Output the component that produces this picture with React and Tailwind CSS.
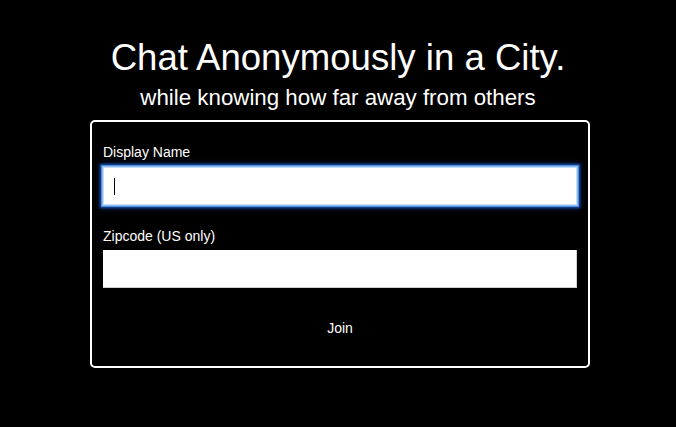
import { useState } from "react";

function App() {
  const [name, setName] = useState("");
  const [zip, setZip] = useState("");

  return (
    <div className="min-h-screen w-full bg-black text-white font-['Liberation_Sans',Arial,sans-serif] pt-[37px]">
      <div className="text-center">
        <h1 className="text-[36.6px] leading-[41px]">Chat Anonymously in a City.</h1>
        <div className="text-[22.3px] leading-[25px] mt-[7px]">while knowing how far away from others</div>
      </div>

      <div className="flex justify-center pl-[4px] mt-[10px]">
        <div className="w-[500px] border-2 border-white rounded-[5px] px-[11px] pt-[22px] pb-[30px]">
          <label className="block text-[14px] leading-[16px] mb-[7px]">Display Name</label>
          <div className="relative">
            <input
              value={name}
              onChange={(e) => setName(e.target.value)}
              className="block w-full h-[38px] bg-white text-black px-[10px] outline-none caret-transparent shadow-[inset_0_0_0_1px_#c5dcf8,0_0_0_1px_#8fbcf2,0_0_0_2px_#4a8de0,0_0_2px_3px_rgba(30,90,190,0.85),0_0_5px_4px_rgba(20,60,140,0.5)]"
            />
            <span className="absolute left-[11px] top-[11px] w-px h-[17px] bg-black"></span>
          </div>

          <label className="block text-[14px] leading-[16px] mt-[23px] mb-[6px]">Zipcode (US only)</label>
          <input
            value={zip}
            onChange={(e) => setZip(e.target.value)}
            className="block w-full h-[38px] bg-white text-black px-[10px] outline-none border-b border-r border-[#d0d0d0]"
          />

          <div className="flex justify-center mt-[32px]">
            <button className="text-[14px] leading-[16px] text-white cursor-pointer">Join</button>
          </div>
        </div>
      </div>
    </div>
  );
}

export default App;
